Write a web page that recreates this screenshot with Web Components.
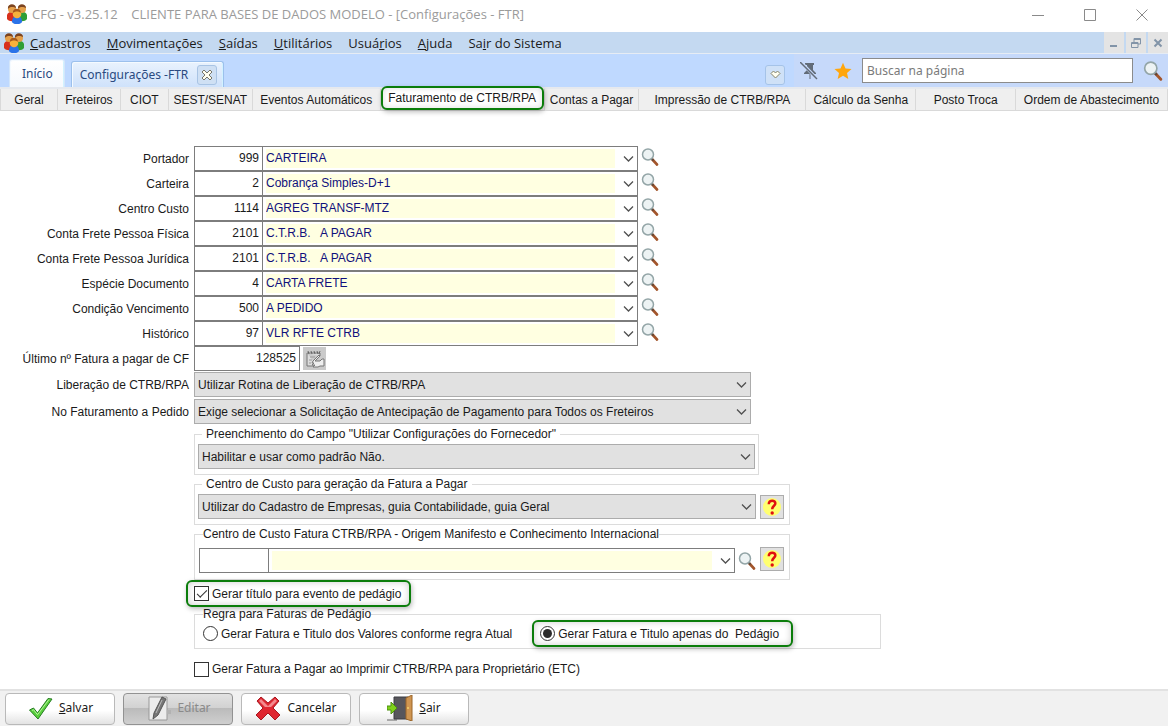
<!DOCTYPE html>
<html lang="pt-BR">
<head>
<meta charset="utf-8">
<title>CFG - Configurações - FTR</title>
<style>
  html, body {
    margin: 0;
    height: 100%;
  }
  body {
    font: 12px/14px "Liberation Sans", Arial, sans-serif;
    color: #1a1a1a;
    background: #fff;
  }
</style>
</head>
<body>

<template id="app-icon">
  <style>
    :host { display: block; width: 20px; height: 20px; }
    svg { display: block; width: 100%; height: 100%; }
  </style>
</template>

<template id="cfg-window">
  <style>
    :host { display: flex; flex-direction: column; min-height: 100vh; }
    main { flex: 1; }
  </style>
  <slot name="bars"></slot>
  <main><slot></slot></main>
  <slot name="footer"></slot>
</template>

<template id="title-bar">
  <style>
    :host {
      display: flex;
      align-items: center;
      height: 32px;
      padding-left: 7px;
      color: #9b9b9b;
      font: 13px/16px "Open Sans", "Noto Sans", sans-serif;
    }
    .title { flex: 1; padding: 0 5px; white-space: pre; }
    app-icon { margin-bottom: 4px; }
    .title, button { padding-bottom: 4px; }
    button {
      width: 52px;
      height: 32px;
      border: 0;
      background: none;
      display: grid;
      place-items: center;
    }
    svg { fill: none; stroke: #8a8a8a; }
  </style>
  <app-icon name="people"></app-icon>
  <span class="title"><slot></slot></span>
  <button aria-label="Minimizar"><svg width="12" height="12"><path d="M0 6.5h12"/></svg></button>
  <button aria-label="Maximizar"><svg width="12" height="12"><path d="M.5.5h11v11H.5z"/></svg></button>
  <button aria-label="Fechar"><svg width="12" height="12"><path d="M.5.5l11 11M11.5.5l-11 11"/></svg></button>
</template>

<template id="menu-bar">
  <style>
    :host {
      display: flex;
      align-items: center;
      box-sizing: border-box;
      height: 22px;
      padding-left: 4px;
      background: #c4d9f1;
      border-bottom: 1px solid #e6ecf4;
    }
    nav { display: flex; gap: 16px; flex: 1; padding-left: 6px; }
    .mdi { display: flex; gap: 2px; }
    .mdi button {
      width: 20px;
      height: 21px;
      padding: 0;
      border: 0;
      background: #e4e4e4;
      display: grid;
      place-items: center;
    }
    svg { fill: none; stroke: #8294a8; }
  </style>
  <app-icon name="people"></app-icon>
  <nav><slot></slot></nav>
  <div class="mdi">
    <button aria-label="Minimizar janela"><svg width="10" height="10"><path d="M1 8h7" stroke-width="2"/></svg></button>
    <button aria-label="Restaurar janela"><svg width="10" height="10"><path d="M3 4V.5h6.500V6H7M3 1.500h6M.5 4.500H7v5H.5zM.5 5.500H7"/></svg></button>
    <button aria-label="Fechar janela"><svg width="10" height="10"><path d="M1.500 1.500l7 7M8.500 1.500l-7 7" stroke-width="2"/></svg></button>
  </div>
</template>

<template id="menu-item">
  <style>
    :host { display: block; }
    button {
      padding: 0;
      border: 0;
      background: none;
      color: #1b1b1b;
      font: 13px/18px "Open Sans", "Noto Sans", sans-serif;
    }
  </style>
  <button><slot></slot></button>
</template>

<template id="tool-bar">
  <style>
    :host {
      display: flex;
      height: 33px;
      background: #bfd9ff;
      border-bottom: 2px solid #e6e9ee;
      font: 12px/16px "Noto Sans", sans-serif;
    }
    .tabs { display: flex; align-items: flex-end; gap: 6px; flex: 1; padding-left: 9px; }
    .tools {
      display: flex;
      align-items: center;
      gap: 16px;
      width: 374px;
      box-sizing: border-box;
      padding: 0 5px 0 6px;
      background: #c6d9fa;
    }
    .tools button { padding: 0; border: 0; background: none; display: block; }
    .more {
      align-self: center;
      margin: 8px 9px 0 0;
      width: 20px;
      height: 20px;
      padding: 0;
      border: 1px solid #a5c3e8;
      border-radius: 3px;
      background: #cfe1f7;
      display: grid;
      place-items: center;
    }
    .pin, .star { width: 18px; height: 18px; }
    input {
      flex: 1;
      min-width: 0;
      height: 25px;
      box-sizing: border-box;
      margin: 0 -6px;
      padding: 0 4px;
      border: 1px solid #8b8b8b;
      font: inherit;
    }
    input::placeholder { color: #7a7a7a; opacity: 1; }
  </style>
  <div class="tabs"><slot></slot></div>
  <button class="more" aria-label="Mais abas"><svg width="11" height="9"><path d="M1 3.500L3.500 1l2 2 2-2L10 3.500 5.500 8z" fill="#fffef0" stroke="#84836a"/></svg></button>
  <div class="tools">
    <button aria-label="Desafixar"><app-icon class="pin" name="pin"></app-icon></button>
    <button aria-label="Favorito"><app-icon class="star" name="star"></app-icon></button>
    <input type="search" placeholder="Buscar na página" aria-label="Buscar na página">
    <button aria-label="Buscar"><app-icon name="lens"></app-icon></button>
  </div>
</template>

<template id="page-tab">
  <style>
    :host {
      display: flex;
      align-items: center;
      gap: 9px;
      height: 26px;
      padding: 0 8px;
      box-sizing: border-box;
      border: 1px solid #9cc0ec;
      border-bottom: 0;
      border-radius: 3px 3px 0 0;
      background: linear-gradient(#e9f2fd, #cfe2fb);
      box-shadow: inset 1px 1px #f4faff, inset -1px 0 #d2f2ff;
    }
    :host([home]) {
      height: 28px;
      padding: 0 11px 0 12px;
      border-color: #d4e6fa;
      background: linear-gradient(#fff, #f6f9fd);
    }
    :host([closable]) { padding-right: 6px; }
    button { padding: 0; border: 0; background: none; color: #2a4a80; font: inherit; }
    .close {
      display: none;
      width: 20px;
      height: 20px;
      border: 1px solid #a9c4e4;
      border-radius: 3px;
      background: #cfe0f4;
      place-items: center;
    }
    :host([closable]) .close { display: grid; }
  </style>
  <button><slot></slot></button>
  <button class="close" aria-label="Fechar aba"><svg width="12" height="12"><path d="M3 1l3 3 3-3 2 2-3 3 3 3-2 2-3-3-3 3-2-2 3-3-3-3z" fill="#fffef0" stroke="#77766a"/></svg></button>
</template>

<template id="section-tabs">
  <style>
    :host {
      display: grid;
      grid-template-columns: 57fr 63fr 48fr 84fr 128fr 164fr 95fr 167fr 110fr 100fr 152fr;
      height: 22px;
      background: #efefef;
      border-left: 1px solid #d9d9d9;
    }
  </style>
  <slot></slot>
</template>

<template id="section-tab">
  <style>
    :host {
      display: grid;
      position: relative;
      border-right: 1px solid #d9d9d9;
      border-bottom: 1px solid #d9d9d9;
      min-width: 0;
    }
    button {
      padding: 0;
      border: 0;
      background: none;
      color: #1a1a1a;
      font: inherit;
      white-space: nowrap;
    }
    /* the marked tab stands out over its neighbours */
    :host([marked]) button {
      position: absolute;
      inset: -3px 0 0 0;
      border: 2px solid #0b7d0b;
      border-radius: 6px;
      background: #fff;
      box-shadow: 1px 2px 5px #0004, inset 0 0 6px #0002;
    }
  </style>
  <button><slot></slot></button>
</template>

<template id="form-row">
  <style>
    :host { display: flex; align-items: center; gap: 5px; height: 25px; }
    label { width: 189px; flex: none; text-align: right; white-space: nowrap; }
    :host([choice]) { height: 27px; }
    .lookup { display: flex; width: 444px; }
    .code, .number {
      box-sizing: border-box;
      width: 69px;
      height: 25px;
      margin: 0;
      padding: 0 3px 1px;
      border: 1px solid #7d7d7d;
      color: #1a1a1a;
      font: inherit;
      text-align: right;
    }
    .number { width: 106px; }
    combo-box { flex: 1; }
    .choice { flex: 0 1 557px; }
    .lens { padding: 0; border: 0; background: none; margin: 0 0 3px -2px; }
    .lens app-icon { width: 18px; height: 18px; }
    .edit { width: 23px; height: 23px; padding: 0; margin-left: -2px; border: 0; background: #cacaca; display: grid; place-items: center; }
  </style>
</template>

<template id="combo-box">
  <style>
    :host { display: block; position: relative; min-width: 0; }
    select {
      appearance: none;
      display: block;
      box-sizing: border-box;
      width: 100%;
      height: 25px;
      margin: 0;
      padding: 0 24px 0 3px;
      border: 1px solid #acacac;
      border-radius: 0;
      background: #e1e1e1;
      color: #1a1a1a;
      font: inherit;
    }
    :host([lookup]) select {
      border: 1px solid #7d7d7d;
      border-left: 0;
      padding: 0 24px 1px 3px;
      background: linear-gradient(#ffffe1, #ffffe1) 3px 2px / calc(100% - 25px) 19px no-repeat #fff;
      color: #10107c;
    }
    svg {
      position: absolute;
      right: 4px;
      top: 9px;
      fill: none;
      stroke: #505050;
      stroke-width: 1.3;
      pointer-events: none;
    }
  </style>
  <select></select>
  <svg width="11" height="8"><path d="M1 1.500l4.500 4.500L10 1.500"/></svg>
</template>

<template id="group-box">
  <style>
    :host { display: block; }
    fieldset {
      margin: 0;
      padding: 3px 3px 5px;
      border: 1px solid #dcdcdc;
      min-width: 0;
    }
    legend { height: 14px; margin-left: 5px; padding: 0; white-space: nowrap; }
    :host([spaced]) legend { margin-left: 4px; padding: 0 4px; }
    .row { display: flex; align-items: center; }
    :host([tight]) fieldset { padding-top: 0; padding-bottom: 1px; }
    :host([tight]) .row { margin-top: -1px; }
  </style>
  <fieldset>
    <legend></legend>
    <div class="row"><slot></slot></div>
  </fieldset>
</template>

<template id="lookup-line">
  <style>
    :host { display: flex; align-items: center; flex: none; width: 558px; padding: 4px 0 1px 1px; box-sizing: border-box; }
    input { width: 70px; height: 25px; box-sizing: border-box; border: 1px solid #7d7d7d; margin: 0; font: inherit; }
    combo-box { flex: 1; }
    button { padding: 0; border: 0; background: none; margin-left: 3px; }
    app-icon { width: 18px; height: 18px; }
  </style>
  <input aria-label="Código do centro de custo">
  <combo-box lookup label="Centro de custo" value=""></combo-box>
  <button aria-label="Pesquisar"><app-icon name="lens"></app-icon></button>
</template>

<template id="help-button">
  <style>
    :host { display: block; margin-left: 4px; }
    button { width: 24px; height: 24px; padding: 0; border: 1px solid #adadad; background: #e1e1e1; display: grid; place-items: center; }
    app-icon { width: 20px; height: 20px; }
  </style>
  <button aria-label="Ajuda"><app-icon name="help"></app-icon></button>
</template>

<template id="tick-option">
  <style>
    :host { display: flex; }
    label {
      display: flex;
      align-items: center;
      gap: 3px;
      height: 22px;
      padding: 2px 8px;
    }
    span { white-space: pre; }
    :host([type="radio"]) label { padding: 2px 20px 2px 5px; }
    :host([marked]) label {
      height: 23px;
      padding: 0 8px 0 6px;
      border: 2px solid #0b7d0b;
      border-radius: 6px;
      background: #fff;
      box-shadow: 1px 2px 5px #0004, inset 0 0 7px #0003;
    }
    :host([marked][type="radio"]) label { padding-right: 12px; }
    input {
      appearance: none;
      flex: none;
      display: grid;
      place-items: center;
      box-sizing: border-box;
      width: 15px;
      height: 15px;
      margin: 0;
      border: 1px solid #333;
      background: #fff;
    }
    input[type="radio"] { border-radius: 50%; }
    input[type="radio"]:checked::before {
      content: "";
      width: 9px;
      height: 9px;
      border-radius: 50%;
      background: #2b2b2b;
    }
    input[type="checkbox"]:checked::before {
      content: "";
      width: 9px;
      height: 4px;
      margin-bottom: 3px;
      border: solid #333;
      border-width: 0 0 1px 1px;
      transform: rotate(-45deg);
    }
  </style>
  <label><input><span><slot></slot></span></label>
</template>

<template id="settings-form">
  <style>
    :host { display: block; padding-top: 35px; }
    ::slotted(group-box), ::slotted(tick-option) { margin-left: 194px; }
  </style>
  <slot></slot>
</template>

<template id="action-bar">
  <style>
    :host {
      display: flex;
      gap: 8px;
      height: 37px;
      box-sizing: border-box;
      padding: 2px 5px 0;
      border-top: 2px solid #e2e2e2;
      background: #f1f1f1;
    }
  </style>
  <slot></slot>
</template>

<template id="action-button">
  <style>
    :host { display: block; width: 110px; }
    button {
      display: flex;
      align-items: center;
      justify-content: center;
      gap: 6px;
      width: 100%;
      height: 32px;
      padding: 0 0 2px;
      border: 1px solid #b9b9b9;
      border-radius: 4px;
      background: linear-gradient(#fff 55%, #e3e3e3);
      color: #1a1a1a;
      font: 12px/16px "Noto Sans", sans-serif;
    }
    button:disabled {
      border-color: #929292;
      background: linear-gradient(#e2e2e2, #d2d2d2 45%, #bababa 46%, #cfcfcf);
      color: #8a8a8a;
    }
    app-icon { width: 26px; height: 26px; }
  </style>
  <button><app-icon></app-icon><span><slot></slot></span></button>
</template>

<cfg-window>
  <title-bar slot="bars">CFG - v3.25.12    CLIENTE PARA BASES DE DADOS MODELO - [Configurações - FTR]</title-bar>
  <menu-bar slot="bars">
    <menu-item><u>C</u>adastros</menu-item>
    <menu-item><u>M</u>ovimentações</menu-item>
    <menu-item><u>S</u>aídas</menu-item>
    <menu-item><u>U</u>tilitários</menu-item>
    <menu-item>Usuá<u>r</u>ios</menu-item>
    <menu-item><u>A</u>juda</menu-item>
    <menu-item>Sa<u>i</u>r do Sistema</menu-item>
  </menu-bar>
  <tool-bar slot="bars">
    <page-tab home>Início</page-tab>
    <page-tab closable>Configurações -FTR</page-tab>
  </tool-bar>
  <section-tabs slot="bars">
    <section-tab>Geral</section-tab>
    <section-tab>Freteiros</section-tab>
    <section-tab>CIOT</section-tab>
    <section-tab>SEST/SENAT</section-tab>
    <section-tab>Eventos Automáticos</section-tab>
    <section-tab marked>Faturamento de CTRB/RPA</section-tab>
    <section-tab>Contas a Pagar</section-tab>
    <section-tab>Impressão de CTRB/RPA</section-tab>
    <section-tab>Cálculo da Senha</section-tab>
    <section-tab>Posto Troca</section-tab>
    <section-tab>Ordem de Abastecimento</section-tab>
  </section-tabs>

  <settings-form>
    <form-row label="Portador" code="999" value="CARTEIRA"></form-row>
    <form-row label="Carteira" code="2" value="Cobrança Simples-D+1"></form-row>
    <form-row label="Centro Custo" code="1114" value="AGREG TRANSF-MTZ"></form-row>
    <form-row label="Conta Frete Pessoa Física" code="2101" value="C.T.R.B.&nbsp;&nbsp; A PAGAR"></form-row>
    <form-row label="Conta Frete Pessoa Jurídica" code="2101" value="C.T.R.B.&nbsp;&nbsp; A PAGAR"></form-row>
    <form-row label="Espécie Documento" code="4" value="CARTA FRETE"></form-row>
    <form-row label="Condição Vencimento" code="500" value="A PEDIDO"></form-row>
    <form-row label="Histórico" code="97" value="VLR RFTE CTRB"></form-row>
    <form-row label="Último nº Fatura a pagar de CF" number="128525"></form-row>
    <form-row choice label="Liberação de CTRB/RPA" value="Utilizar Rotina de Liberação de CTRB/RPA"></form-row>
    <form-row choice label="No Faturamento a Pedido" value="Exige selecionar a Solicitação de Antecipação de Pagamento para Todos os Freteiros"></form-row>

    <group-box spaced style="max-width: 565px; margin-top: 2px" label='Preenchimento do Campo "Utilizar Configurações do Fornecedor"'>
      <combo-box style="flex: 1" label="Preenchimento do campo" value="Habilitar e usar como padrão Não."></combo-box>
    </group-box>
    <group-box spaced style="max-width: 596px; margin-top: 2px" label="Centro de Custo para geração da Fatura a Pagar">
      <combo-box style="flex: 0 1 558px" label="Centro de custo para geração" value="Utilizar do Cadastro de Empresas, guia Contabilidade, guia Geral"></combo-box>
      <help-button></help-button>
    </group-box>
    <group-box style="max-width: 596px; margin-top: 2px" label="Centro de Custo Fatura CTRB/RPA - Origem Manifesto e Conhecimento Internacional">
      <lookup-line></lookup-line>
      <help-button></help-button>
    </group-box>
    <tick-option type="checkbox" checked marked style="margin-left: 186px">Gerar título para evento de pedágio</tick-option>
    <group-box tight style="max-width: 687px" label="Regra para Faturas de Pedágio">
      <tick-option type="radio">Gerar Fatura e Titulo dos Valores conforme regra Atual</tick-option>
      <tick-option type="radio" checked marked>Gerar Fatura e Titulo apenas do  Pedágio</tick-option>
    </group-box>
    <tick-option type="checkbox" style="margin: 7px 0 0 186px">Gerar Fatura a Pagar ao Imprimir CTRB/RPA para Proprietário (ETC)</tick-option>
  </settings-form>

  <action-bar slot="footer">
    <action-button icon="check"><u>S</u>alvar</action-button>
    <action-button icon="edit" disabled>Editar</action-button>
    <action-button icon="cancel">Cancelar</action-button>
    <action-button icon="door"><u>S</u>air</action-button>
  </action-bar>
</cfg-window>

<script>
const ICONS = {
  people: `<svg viewBox="0 0 20 20">
    <path d="M0 15c-1-6 2-7 5-7s5 2 5 7c-2 3-8 3-10 0z" fill="#d8301c"/>
    <path d="M10 15c0-5 2-7 5-7s6 1 5 7c-2 3-8 3-10 0z" fill="#2f9e35"/>
    <circle cx="5" cy="5" r="4" fill="#e5a04a"/><circle cx="15" cy="5" r="4" fill="#e5a04a"/>
    <path d="M1 5c-1-6 8-6 8-1-2-1-6-2-8 1zM11 5c-1-6 8-6 8-1-2-1-6-2-8 1z" fill="#7c4420"/>
    <path d="M5 18c0-4 2-6 5-6s5 2 5 6c-2 3-8 3-10 0z" fill="#2b73e8"/>
    <circle cx="10" cy="10" r="4.300" fill="#f6b23c"/>
    <path d="M6 9c-1-5 8-6 8 0-2-2-6-2-8 0z" fill="#a85b1c"/></svg>`,
  lens: `<svg viewBox="0 0 18 18">
    <path d="M10.500 10.500l5.500 6" stroke="#a3552b" stroke-width="2.600" stroke-linecap="round"/>
    <path d="M10 10l2.500 2.500" stroke="#5e4638" stroke-width="2"/>
    <circle cx="7" cy="6.500" r="5.500" fill="#edf3f4" stroke="#93a5a7" stroke-width="1.500"/></svg>`,
  pin: `<svg viewBox="0 0 18 18">
    <path d="M5 1h9v2h-1v5l3 3v1h-5.500v5h-1v-5H4v-1l3-3V3H5z" fill="#626c78"/>
    <path d="M1 0l16 17" stroke="#c6d9fa" stroke-width="3"/><path d="M0 0l17 17" stroke="#626c78" stroke-width="1.500"/></svg>`,
  star: `<svg viewBox="0 0 18 18"><path d="M9 .8l2.500 5.600 6 .6-4.500 4 1.300 6L9 13.800 3.700 17 5 11 .5 7l6-.6z" fill="#ffa60d"/></svg>`,
  help: `<svg viewBox="0 0 20 20"><circle cx="10" cy="10" r="9" fill="#ffff70"/>
    <path d="M6.800 7.300c-.3-5 7.200-4.600 6.500-.5-.3 2-3.100 2.300-3.100 5.500" fill="none" stroke="#e01010" stroke-width="2.500"/>
    <circle cx="10.200" cy="16" r="1.700" fill="#e01010"/></svg>`,
  notepad: `<svg viewBox="0 0 20 20"><path d="M2 4h13v3M2 4v13h10" fill="#ddd" stroke="#777"/>
    <path d="M3 2l1 3M6 2l1 3M9 2l1 3M12 2l1 3M15 2l-1 3" stroke="#666"/>
    <path d="M5 8h5M4 11h3M4 14h2" stroke="#999"/>
    <path d="M8 12l6-6 1 1-5 5h5l2-2h2v7h-4l-2 1h-5l2-2H7l2-2H7z" fill="#eee" stroke="#777"/></svg>`,
  check: `<svg viewBox="0 0 26 26"><path d="M2.500 15l4-2 4 5L21 3.500l4 .5-14 20z" fill="#59cf3c" stroke="#287d25"/>
    <path d="M5 15.500l1.500-.8 4 5L22 4.500" fill="none" stroke="#b4f49b"/></svg>`,
  edit: `<svg viewBox="0 0 26 26"><path d="M4 2h18v23H4z" fill="#ececec" stroke="#999"/>
    <path d="M17 2l4 2-8 16-5 4 1-6z" fill="#777" stroke="#555"/><path d="M17 5l-6 13" stroke="#bbb"/>
    <path d="M22 15h4v4h-4z" fill="#b2b2b2"/></svg>`,
  cancel: `<svg viewBox="0 0 26 26"><path d="M6 2l7 6 7-6 4 4-6 7 7 7-5 5-7-7-7 7-5-5 7-7-6-7z" fill="#df2630" stroke="#a81820" stroke-linejoin="round"/>
    <path d="M6 4l7 7 7-7 2 2-6 6H10L4 6z" fill="#f48a8e"/></svg>`,
  door: `<svg viewBox="0 0 26 26"><path d="M0 25h10" stroke="#666"/>
    <path d="M7 2h14v22H7z" fill="#57565c" stroke="#3d3d42"/>
    <path d="M19 3l6-3v26l-6-2z" fill="#cf9551" stroke="#9a6529"/><circle cx="21" cy="13" r="1" fill="#f3d26d"/>
    <path d="M0 11h4V7l6 6-6 6v-4H0z" fill="#7fd11b" stroke="#4d8f10"/></svg>`
};

// Base element: clones the template that has the tag's own name
class CfgElement extends HTMLElement {
  constructor() {
    super();
    const template = document.getElementById(this.localName);
    this.attachShadow({mode: 'open'}).appendChild(template.content.cloneNode(true));
  }

  find(selector) {
    return this.shadowRoot.querySelector(selector);
  }
}

class AppIcon extends CfgElement {
  static observedAttributes = ['name'];

  attributeChangedCallback(name, old, value) {
    const previous = this.find('svg');
    if (previous) previous.remove();
    this.shadowRoot.append(document.createRange().createContextualFragment(ICONS[value]));
  }
}

class ComboBox extends CfgElement {
  connectedCallback() {
    const select = this.find('select');
    select.replaceChildren(new Option(this.getAttribute('value')));
    select.setAttribute('aria-label', this.getAttribute('label'));
  }
}

class FormRow extends CfgElement {
  connectedCallback() {
    const label = document.createElement('label');
    label.textContent = this.getAttribute('label');
    this.shadowRoot.append(label);

    if (this.hasAttribute('choice')) {
      const combo = this.makeCombo();
      combo.className = 'choice';
      label.addEventListener('click', () => combo.find('select').focus());
      this.shadowRoot.append(combo);
      return;
    }

    const input = document.createElement('input');
    input.id = 'field';
    label.htmlFor = 'field';

    if (this.hasAttribute('number')) {
      input.className = 'number';
      input.value = this.getAttribute('number');
      this.shadowRoot.append(input, this.makeButton('edit', 'notepad', 'Alterar número'));
      return;
    }

    input.className = 'code';
    input.value = this.getAttribute('code');
    const combo = this.makeCombo();
    combo.setAttribute('lookup', '');
    const lookup = document.createElement('div');
    lookup.className = 'lookup';
    lookup.append(input, combo);
    this.shadowRoot.append(lookup, this.makeButton('lens', 'lens', 'Pesquisar'));
  }

  makeCombo() {
    const combo = document.createElement('combo-box');
    combo.setAttribute('label', this.getAttribute('label'));
    combo.setAttribute('value', this.getAttribute('value'));
    return combo;
  }

  makeButton(className, icon, title) {
    const button = document.createElement('button');
    button.className = className;
    button.setAttribute('aria-label', title);
    const glyph = document.createElement('app-icon');
    glyph.setAttribute('name', icon);
    button.append(glyph);
    return button;
  }
}

class GroupBox extends CfgElement {
  connectedCallback() {
    this.find('legend').textContent = this.getAttribute('label');
    // radios live in separate shadow roots, so the box keeps them exclusive
    this.addEventListener('tick', (event) => {
      this.querySelectorAll('tick-option[type="radio"]').forEach((option) => {
        option.find('input').checked = option === event.target;
      });
    });
  }
}

class TickOption extends CfgElement {
  connectedCallback() {
    const input = this.find('input');
    input.type = this.getAttribute('type');
    input.checked = this.hasAttribute('checked');
    input.addEventListener('change', () => {
      this.dispatchEvent(new CustomEvent('tick', {bubbles: true}));
    });
  }
}

class ActionButton extends CfgElement {
  connectedCallback() {
    this.find('app-icon').setAttribute('name', this.getAttribute('icon'));
    this.find('button').disabled = this.hasAttribute('disabled');
  }
}

customElements.define('app-icon', AppIcon);
customElements.define('combo-box', ComboBox);
customElements.define('form-row', FormRow);
customElements.define('group-box', GroupBox);
customElements.define('tick-option', TickOption);
customElements.define('action-button', ActionButton);

// the rest only need their markup
['cfg-window', 'title-bar', 'menu-bar', 'menu-item', 'tool-bar', 'page-tab', 'section-tabs',
  'section-tab', 'settings-form', 'lookup-line', 'help-button', 'action-bar'].forEach((name) => {
  customElements.define(name, class extends CfgElement {});
});
</script>
</body>
</html>
